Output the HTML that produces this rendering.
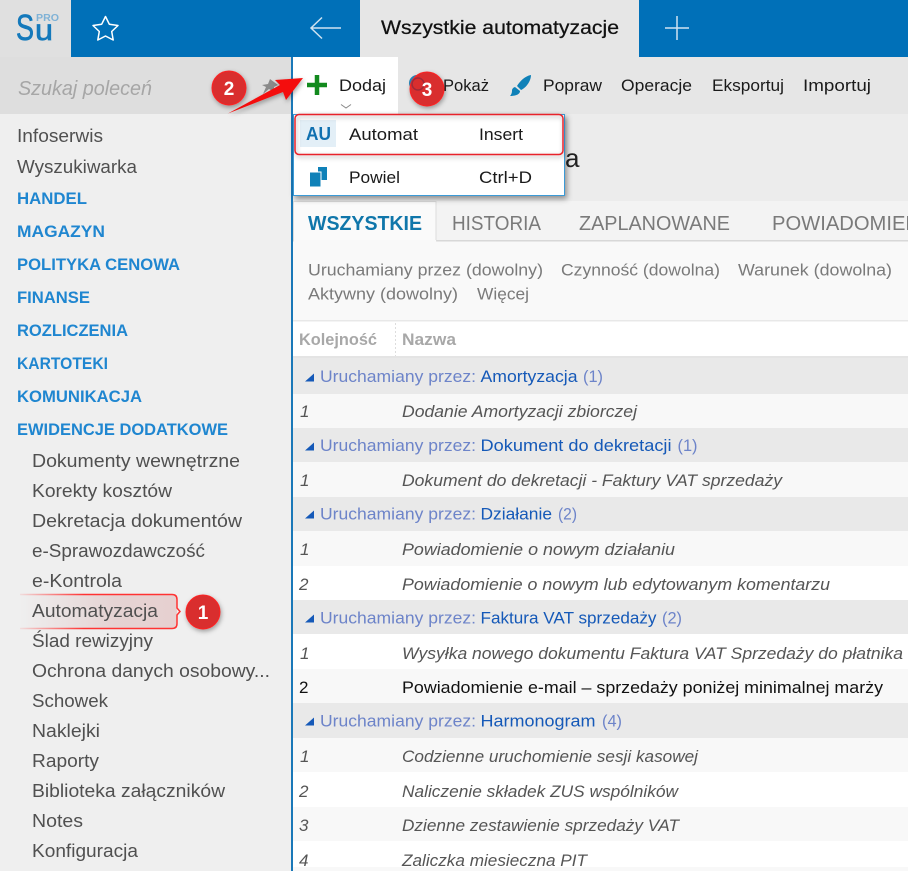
<!DOCTYPE html>
<html lang="pl"><head><meta charset="utf-8"><title>Wszystkie automatyzacje</title>
<style>
html,body{margin:0;padding:0;background:#fff}
svg{display:block}
text{font-family:"Liberation Sans",sans-serif;font-size:18px;white-space:pre}
.s text{fill:#505050}
.h text{fill:#1f86d0;font-weight:bold;font-size:17px}
.t text{fill:#1a1a1a;font-size:17px}
.f text{fill:#7a7a7a;font-size:17px}
.g text{font-size:17px}
.r text{fill:#555;font-size:17px;font-style:italic}
.w text{fill:#fff;font-weight:bold}
</style></head><body>
<svg width="908" height="871" viewBox="0 0 908 871" xmlns="http://www.w3.org/2000/svg">
<defs>
<filter id="sh" x="-20%" y="-20%" width="140%" height="140%"><feDropShadow dx="2" dy="3" stdDeviation="3" flood-color="#000" flood-opacity=".4"/></filter>
<filter id="sh2" x="-30%" y="-30%" width="160%" height="160%"><feDropShadow dx="1" dy="2" stdDeviation="2.5" flood-color="#000" flood-opacity=".35"/></filter>
<linearGradient id="sel" x1="0" x2="1" y1="0" y2="0"><stop offset="0" stop-color="#efefef"/><stop offset=".6" stop-color="#e5d3d3"/><stop offset="1" stop-color="#e6d0d0"/></linearGradient>
<linearGradient id="ln" x1="0" x2="1" y1="0" y2="0"><stop offset="0" stop-color="#f33" stop-opacity=".1"/><stop offset=".4" stop-color="#f33"/></linearGradient>
</defs>
<rect width="908" height="871" fill="#fff"/>
<!-- top bar -->
<rect width="908" height="57" fill="#0070b8"/>
<rect width="71" height="57" fill="#e0e0e0"/>
<text x="16" y="40" style="font-size:36px;fill:#1479bb;stroke:#1479bb;stroke-width:.7" textLength="18" lengthAdjust="spacingAndGlyphs">S</text>
<text x="35" y="40" style="font-size:30px;fill:#1479bb;stroke:#1479bb;stroke-width:.7" textLength="18" lengthAdjust="spacingAndGlyphs">u</text>
<text x="36" y="21" style="font-size:10px;fill:#7fb2d6;font-weight:bold" textLength="23" lengthAdjust="spacingAndGlyphs">PRO</text>
<path d="M105.500 16.500L109.300 24.200 118 25.500 111.700 31.500 113.200 40 105.500 36 97.800 40 99.300 31.500 93 25.500 101.700 24.200z" fill="none" stroke="#fff" stroke-width="1.500" stroke-linejoin="round"/>
<path d="M341 28H311.500M322 17.500L311 28l11 10.500" fill="none" stroke="#cfe3f1" stroke-width="1.500"/>
<rect x="360" width="279" height="57" fill="#e6e6e6"/>
<text x="381" y="34" style="font-size:19px;fill:#111;font-weight:normal;stroke:#111;stroke-width:.25" textLength="238" lengthAdjust="spacingAndGlyphs">Wszystkie automatyzacje</text>
<path d="M677 16v24M665 28h24" stroke="#cfe3f1" stroke-width="1.500"/>
<!-- search & sidebar -->
<rect y="57" width="291" height="57" fill="#dedede"/>
<rect y="114" width="291" height="757" fill="#efefef"/>
<text x="18" y="95" style="font-size:20px;font-style:italic;fill:#a6a6a6" textLength="134" lengthAdjust="spacingAndGlyphs">Szukaj poleceń</text>
<path d="M270 79l8 6-4 2 0 5-5-3-6 5 3-7-4-2 6-1z" fill="#8a8a8a"/>
<rect x="291" y="57" width="2" height="814" fill="#1a78b8"/>
<g class="s">
<text x="17" y="142" textLength="86" lengthAdjust="spacingAndGlyphs">Infoserwis</text>
<text x="17" y="173" textLength="120" lengthAdjust="spacingAndGlyphs">Wyszukiwarka</text>
</g>
<g class="h">
<text x="17" y="204" textLength="70" lengthAdjust="spacingAndGlyphs">HANDEL</text>
<text x="17" y="237" textLength="88" lengthAdjust="spacingAndGlyphs">MAGAZYN</text>
<text x="17" y="270" textLength="163" lengthAdjust="spacingAndGlyphs">POLITYKA CENOWA</text>
<text x="17" y="303" textLength="73" lengthAdjust="spacingAndGlyphs">FINANSE</text>
<text x="17" y="336" textLength="111" lengthAdjust="spacingAndGlyphs">ROZLICZENIA</text>
<text x="17" y="369" textLength="91" lengthAdjust="spacingAndGlyphs">KARTOTEKI</text>
<text x="17" y="402" textLength="125" lengthAdjust="spacingAndGlyphs">KOMUNIKACJA</text>
<text x="17" y="435" textLength="211" lengthAdjust="spacingAndGlyphs">EWIDENCJE DODATKOWE</text>
</g>
<!-- selected -->
<rect x="20" y="595" width="157" height="33" fill="url(#sel)"/>
<path d="M20 594.500H172q5 0 5 5V608l3 3.500-3 3.500v8.500q0 5-5 5H20" fill="none" stroke="url(#ln)" stroke-width="1.500"/>
<g class="s">
<text x="32" y="467" textLength="208" lengthAdjust="spacingAndGlyphs">Dokumenty wewnętrzne</text>
<text x="32" y="497" textLength="140" lengthAdjust="spacingAndGlyphs">Korekty kosztów</text>
<text x="32" y="527" textLength="210" lengthAdjust="spacingAndGlyphs">Dekretacja dokumentów</text>
<text x="32" y="557" textLength="173" lengthAdjust="spacingAndGlyphs">e-Sprawozdawczość</text>
<text x="32" y="587" textLength="90" lengthAdjust="spacingAndGlyphs">e-Kontrola</text>
<text x="32" y="617" textLength="126" lengthAdjust="spacingAndGlyphs">Automatyzacja</text>
<text x="32" y="647" textLength="121" lengthAdjust="spacingAndGlyphs">Ślad rewizyjny</text>
<text x="32" y="677" textLength="238" lengthAdjust="spacingAndGlyphs">Ochrona danych osobowy...</text>
<text x="32" y="707" textLength="76" lengthAdjust="spacingAndGlyphs">Schowek</text>
<text x="32" y="737" textLength="68" lengthAdjust="spacingAndGlyphs">Naklejki</text>
<text x="32" y="767" textLength="67" lengthAdjust="spacingAndGlyphs">Raporty</text>
<text x="32" y="797" textLength="193" lengthAdjust="spacingAndGlyphs">Biblioteka załączników</text>
<text x="32" y="827" textLength="51" lengthAdjust="spacingAndGlyphs">Notes</text>
<text x="32" y="857" textLength="106" lengthAdjust="spacingAndGlyphs">Konfiguracja</text>
</g>
<!-- toolbar -->
<rect x="293" y="57" width="615" height="57" fill="#e6e6e6"/>
<rect x="293" y="57" width="105" height="57" fill="#fff"/>
<path d="M317 75v20M307 85h20" stroke="#128a1e" stroke-width="4.500"/>
<g class="t">
<text x="339" y="91" textLength="47" lengthAdjust="spacingAndGlyphs">Dodaj</text>
<text x="443" y="91" textLength="46" lengthAdjust="spacingAndGlyphs">Pokaż</text>
<text x="543" y="91" textLength="59" lengthAdjust="spacingAndGlyphs">Popraw</text>
<text x="621" y="91" textLength="71" lengthAdjust="spacingAndGlyphs">Operacje</text>
<text x="712" y="91" textLength="72" lengthAdjust="spacingAndGlyphs">Eksportuj</text>
<text x="803" y="91" textLength="68" lengthAdjust="spacingAndGlyphs">Importuj</text>
</g>
<path d="M341 104.500l5 3.500 5-3.500" fill="none" stroke="#888" stroke-width="1"/>
<circle cx="417" cy="83" r="8" fill="#2a86b8"/>
<path d="M531 75c-6 1-11 6-14 11l4 4c5-2 10-9 10-15zM515 87c-3 1-3 3-3 4 0 2-1 4-2 5 4 0 10-1 10-5z" fill="#0f81b8"/>
<!-- content -->
<rect x="293" y="114" width="615" height="87" fill="#ececec"/>
<text x="565" y="167" style="font-size:26px;fill:#222">a</text>
<rect x="293" y="201" width="615" height="40" fill="#f3f3f3"/>
<rect x="293" y="240" width="615" height="1.500" fill="#d8d8d8"/>
<rect x="293.500" y="201.500" width="142.500" height="40" fill="#fafafa" stroke="#dcdcdc"/>
<rect x="294" y="240" width="142" height="3" fill="#f9f9f9"/>
<text x="308" y="230" style="font-size:20px;font-weight:bold;fill:#0f76aa" textLength="114" lengthAdjust="spacingAndGlyphs">WSZYSTKIE</text>
<text x="452" y="230" style="font-size:20px;fill:#7a7a7a" textLength="89" lengthAdjust="spacingAndGlyphs">HISTORIA</text>
<text x="579" y="230" style="font-size:20px;fill:#7a7a7a" textLength="151" lengthAdjust="spacingAndGlyphs">ZAPLANOWANE</text>
<text x="772" y="230" style="font-size:20px;fill:#7a7a7a" textLength="148" lengthAdjust="spacingAndGlyphs">POWIADOMIEN</text>
<rect x="293" y="241.500" width="615" height="79" fill="#f9f9f9"/>
<g class="f">
<text x="308" y="275.500" textLength="235" lengthAdjust="spacingAndGlyphs">Uruchamiany przez (dowolny)</text>
<text x="561" y="275.500" textLength="159" lengthAdjust="spacingAndGlyphs">Czynność (dowolna)</text>
<text x="738" y="275.500" textLength="154" lengthAdjust="spacingAndGlyphs">Warunek (dowolna)</text>
<text x="308" y="299.500" textLength="150" lengthAdjust="spacingAndGlyphs">Aktywny (dowolny)</text>
<text x="477" y="299.500" textLength="52" lengthAdjust="spacingAndGlyphs">Więcej</text>
</g>
<rect x="293" y="320" width="615" height="1.500" fill="#e8e8e8"/>
<rect x="293" y="321.500" width="615" height="35" fill="#fff"/>
<rect x="293" y="356" width="615" height="2" fill="#e4e4e4"/>
<text x="299" y="345" style="font-size:16.500px;font-weight:bold;fill:#a8a8a8" textLength="78" lengthAdjust="spacingAndGlyphs">Kolejność</text>
<text x="402" y="345" style="font-size:16.500px;font-weight:bold;fill:#a8a8a8" textLength="54" lengthAdjust="spacingAndGlyphs">Nazwa</text>
<path d="M395.500 323v33" stroke="#ddd" stroke-dasharray="2 2"/>
<!-- rows bg -->
<g fill="#e9e9e9">
<rect x="293" y="358" width="615" height="36"/>
<rect x="293" y="428" width="615" height="34"/>
<rect x="293" y="497" width="615" height="34"/>
<rect x="293" y="600" width="615" height="34"/>
<rect x="293" y="703" width="615" height="35"/>
</g>
<g fill="#f8f8f8">
<rect x="293" y="394" width="615" height="34"/>
<rect x="293" y="462" width="615" height="35"/>
<rect x="293" y="531" width="615" height="35"/>
<rect x="293" y="669" width="615" height="34"/>
<rect x="293" y="738" width="615" height="34"/>
<rect x="293" y="807" width="615" height="34"/>
</g>
<rect x="293" y="867" width="615" height="4" fill="#f8f8f8"/>
<!-- group headings -->
<g fill="#1559b8">
<path d="M305 381.500h9v-8z"/><path d="M305 450.500h9v-8z"/><path d="M305 518.500h9v-8z"/><path d="M305 622.500h9v-8z"/><path d="M305 725.500h9v-8z"/>
</g>
<g class="g">
<text x="320" y="382" style="fill:#6d84c9" textLength="156" lengthAdjust="spacingAndGlyphs">Uruchamiany przez:</text><text x="480.500" y="382" style="fill:#1559b8" textLength="97" lengthAdjust="spacingAndGlyphs">Amortyzacja</text><text x="583" y="382" style="fill:#6d84c9" textLength="20" lengthAdjust="spacingAndGlyphs">(1)</text>
<text x="320" y="451" style="fill:#6d84c9" textLength="156" lengthAdjust="spacingAndGlyphs">Uruchamiany przez:</text><text x="480.500" y="451" style="fill:#1559b8" textLength="191" lengthAdjust="spacingAndGlyphs">Dokument do dekretacji</text><text x="677.500" y="451" style="fill:#6d84c9" textLength="20" lengthAdjust="spacingAndGlyphs">(1)</text>
<text x="320" y="519.500" style="fill:#6d84c9" textLength="156" lengthAdjust="spacingAndGlyphs">Uruchamiany przez:</text><text x="480.500" y="519.500" style="fill:#1559b8" textLength="71.500" lengthAdjust="spacingAndGlyphs">Działanie</text><text x="558" y="519.500" style="fill:#6d84c9" textLength="19" lengthAdjust="spacingAndGlyphs">(2)</text>
<text x="320" y="623.500" style="fill:#6d84c9" textLength="156" lengthAdjust="spacingAndGlyphs">Uruchamiany przez:</text><text x="480.500" y="623.500" style="fill:#1559b8" textLength="176" lengthAdjust="spacingAndGlyphs">Faktura VAT sprzedaży</text><text x="662" y="623.500" style="fill:#6d84c9" textLength="20" lengthAdjust="spacingAndGlyphs">(2)</text>
<text x="320" y="726.500" style="fill:#6d84c9" textLength="156" lengthAdjust="spacingAndGlyphs">Uruchamiany przez:</text><text x="480.500" y="726.500" style="fill:#1559b8" textLength="115" lengthAdjust="spacingAndGlyphs">Harmonogram</text><text x="602" y="726.500" style="fill:#6d84c9" textLength="20" lengthAdjust="spacingAndGlyphs">(4)</text>
</g>
<!-- rows -->
<g class="r">
<text x="300" y="417">1</text><text x="402" y="417" textLength="235" lengthAdjust="spacingAndGlyphs">Dodanie Amortyzacji zbiorczej</text>
<text x="300" y="486">1</text><text x="402" y="486" textLength="380" lengthAdjust="spacingAndGlyphs">Dokument do dekretacji - Faktury VAT sprzedaży</text>
<text x="300" y="555">1</text><text x="402" y="555" textLength="273" lengthAdjust="spacingAndGlyphs">Powiadomienie o nowym działaniu</text>
<text x="299" y="590">2</text><text x="402" y="590" textLength="428" lengthAdjust="spacingAndGlyphs">Powiadomienie o nowym lub edytowanym komentarzu</text>
<text x="300" y="659">1</text><text x="402" y="659" textLength="501" lengthAdjust="spacingAndGlyphs">Wysyłka nowego dokumentu Faktura VAT Sprzedaży do płatnika</text>
<text x="300" y="762">1</text><text x="402" y="762" textLength="296" lengthAdjust="spacingAndGlyphs">Codzienne uruchomienie sesji kasowej</text>
<text x="299" y="797">2</text><text x="402" y="797" textLength="276" lengthAdjust="spacingAndGlyphs">Naliczenie składek ZUS wspólników</text>
<text x="299" y="831">3</text><text x="402" y="831" textLength="277" lengthAdjust="spacingAndGlyphs">Dzienne zestawienie sprzedaży VAT</text>
<text x="299" y="866">4</text><text x="402" y="866" textLength="185" lengthAdjust="spacingAndGlyphs">Zaliczka miesieczna PIT</text>
</g>
<text x="299" y="693" style="font-size:17px;fill:#111">2</text>
<text x="402" y="693" style="font-size:17px;fill:#111" textLength="481" lengthAdjust="spacingAndGlyphs">Powiadomienie e-mail – sprzedaży poniżej minimalnej marży</text>
<!-- dropdown -->
<rect x="293.500" y="114.500" width="271" height="81" fill="#fff" stroke="#3a9ad6" filter="url(#sh)"/>
<rect x="300" y="120" width="36" height="27" fill="#e3eff7"/>
<text x="306" y="140" style="font-size:18px;font-weight:bold;fill:#0f70b0" textLength="25" lengthAdjust="spacingAndGlyphs">AU</text>
<g class="t">
<text x="349" y="140" textLength="69" lengthAdjust="spacingAndGlyphs">Automat</text>
<text x="479" y="140" textLength="44" lengthAdjust="spacingAndGlyphs">Insert</text>
<text x="349" y="183" textLength="51" lengthAdjust="spacingAndGlyphs">Powiel</text>
<text x="479" y="183" textLength="53" lengthAdjust="spacingAndGlyphs">Ctrl+D</text>
</g>
<rect x="318" y="167" width="9" height="13" fill="#0f81b8"/>
<rect x="309.500" y="172" width="11.500" height="15" fill="#0f81b8" stroke="#fff"/>
<rect x="295" y="114.500" width="268" height="40" rx="4" fill="none" stroke="#e8212b" stroke-width="1.500" filter="url(#sh2)"/>
<!-- arrow -->
<path d="M228 113.500L280 85 275 80 303 78 286 100 283 92z" fill="#f40c0c" filter="url(#sh2)"/>
<!-- badges -->
<g filter="url(#sh2)" stroke="#f22" stroke-width="1" fill="#d92d2f">
<circle cx="229" cy="88" r="17"/><circle cx="427" cy="89" r="17"/><circle cx="203" cy="612" r="17"/>
</g>
<circle cx="418" cy="84" r="6" fill="none" stroke="#a02a38" stroke-width="1.500"/>
<g class="w" text-anchor="middle">
<text x="229" y="95" style="font-size:19px">2</text>
<text x="427" y="96" style="font-size:19px">3</text>
<text x="203" y="619" style="font-size:19px">1</text>
</g>
</svg>
</body></html>
